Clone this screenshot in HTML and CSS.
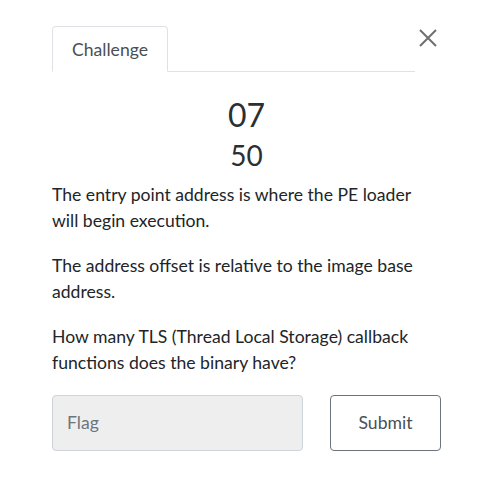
FILE: index.html
```html
<!DOCTYPE html>
<html>
<head>
<meta charset="utf-8">
<link rel="stylesheet" href="styles.css">
</head>
<body>
<div class="modal">
  <div class="header">
    <ul class="tabs">
      <li class="tab active">Challenge</li>
      <li class="tab-fill"></li>
    </ul>
    <button class="close" aria-label="Close">
      <svg width="18" height="18" viewBox="0 0 18 18"><path d="M1 1L17 17M17 1L1 17" stroke="#6f6f6f" stroke-width="2" fill="none"/></svg>
    </button>
  </div>
  <h2 class="name">07</h2>
  <h3 class="value">50</h3>
  <div class="desc">
    <p>The entry point address is where the PE loader will begin execution.</p>
    <p>The address offset is relative to the image base address.</p>
    <p>How many TLS (Thread Local Storage) callback functions does the binary have?</p>
  </div>
  <div class="submit-row">
    <input class="flag" type="text" placeholder="Flag">
    <button class="submit">Submit</button>
  </div>
</div>
</body>
</html>
```

FILE: styles.css
```css
* { box-sizing: border-box; }
html, body { margin: 0; padding: 0; background: #fff; }
body { font-family: Lato, "Noto Sans", sans-serif; color: #212529; }
.modal { width: 495px; padding: 26px 54px 0 52px; }
.header { display: flex; align-items: flex-start; }
.tabs { list-style: none; margin: 0; padding: 0; display: flex; width: 363px; }
.tab { height: 46px; width: 116px; border: 1px solid #dee2e6; border-bottom: 1px solid #fff; border-radius: 4px 4px 0 0; font-size: 17.6px; color: #495057; display: flex; align-items: center; justify-content: center; }
.tab-fill { flex: 1; border-bottom: 1px solid #dee2e6; }
.close { background: none; border: 0; padding: 0; margin: 3px 0 0 4px; width: 19px; height: 19px; display: flex; }
.name { margin: 24px 0 0; text-align: center; font-size: 32px; font-weight: 400; line-height: 1.2; color: #2b2f33; }
.value { margin: 5px 0 0; text-align: center; font-size: 28px; font-weight: 400; line-height: 1.2; color: #2b2f33; }
.desc { margin-top: 9px; font-size: 17.6px; line-height: 26.5px; color: #212529; }
.desc p { margin: 0 0 18px; }
.submit-row { display: flex; gap: 27px; margin-top: 14px; }
.flag { width: 251px; height: 56px; background: #eee; border: 1px solid #ced4da; border-radius: 4px; padding: 0 14px; font-family: inherit; font-size: 17.6px; color: #495057; }
.flag::placeholder { color: #6c757d; }
.submit { width: 111px; height: 56px; background: #fff; border: 1px solid #6c757d; border-radius: 4px; font-family: inherit; font-size: 17.6px; color: #495057; }
```
